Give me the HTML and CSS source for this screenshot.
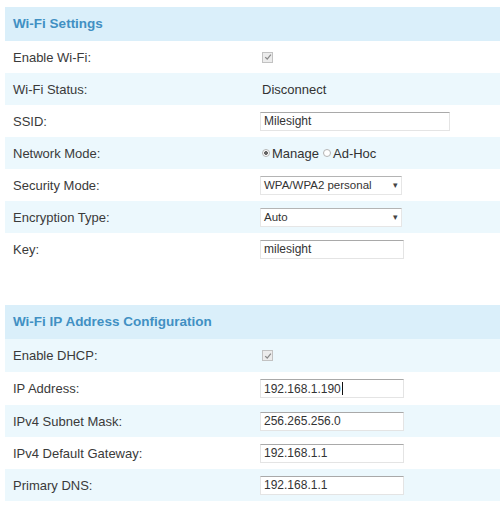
FILE: index.html
```html
<!DOCTYPE html>
<html lang="en">
<head>
	<meta charset="UTF-8">
	<title>Wi-Fi</title>
	<link rel="stylesheet" href="styles.css">
</head>
<body>
	<div class="panel">
		<div class="panel-title">Wi-Fi Settings</div>
		<div class="row">
			<span class="label">Enable Wi-Fi:</span>
			<span class="value"><span class="check"><svg viewBox="0 0 10 10" width="8" height="8"><path d="M1.5 5.2 L4 7.6 L8.6 2" fill="none" stroke="#8a8a8a" stroke-width="1.6"/></svg></span></span>
		</div>
		<div class="row stripe">
			<span class="label">Wi-Fi Status:</span>
			<span class="value">Disconnect</span>
		</div>
		<div class="row">
			<span class="label">SSID:</span>
			<span class="value"><span class="field wide">Milesight</span></span>
		</div>
		<div class="row stripe">
			<span class="label">Network Mode:</span>
			<span class="value"><span class="radio on"></span>Manage<span class="radio gap"></span>Ad-Hoc</span>
		</div>
		<div class="row">
			<span class="label">Security Mode:</span>
			<span class="value"><span class="select"><span class="small">WPA/WPA2 personal</span><span class="arrow">&#9662;</span></span></span>
		</div>
		<div class="row stripe">
			<span class="label">Encryption Type:</span>
			<span class="value"><span class="select"><span class="small">Auto</span><span class="arrow">&#9662;</span></span></span>
		</div>
		<div class="row">
			<span class="label">Key:</span>
			<span class="value"><span class="field">milesight</span></span>
		</div>
	</div>

	<div class="panel second">
		<div class="panel-title">Wi-Fi IP Address Configuration</div>
		<div class="row stripe tall">
			<span class="label">Enable DHCP:</span>
			<span class="value"><span class="check"><svg viewBox="0 0 10 10" width="8" height="8"><path d="M1.5 5.2 L4 7.6 L8.6 2" fill="none" stroke="#8a8a8a" stroke-width="1.6"/></svg></span></span>
		</div>
		<div class="row tall">
			<span class="label">IP Address:</span>
			<span class="value"><span class="field">192.168.1.190<span class="caret"></span></span></span>
		</div>
		<div class="row stripe">
			<span class="label">IPv4 Subnet Mask:</span>
			<span class="value"><span class="field">256.265.256.0</span></span>
		</div>
		<div class="row">
			<span class="label">IPv4 Default Gateway:</span>
			<span class="value"><span class="field">192.168.1.1</span></span>
		</div>
		<div class="row stripe">
			<span class="label">Primary DNS:</span>
			<span class="value"><span class="field">192.168.1.1</span></span>
		</div>
	</div>
</body>
</html>
```

FILE: styles.css
```css
body {
	margin: 0;
	padding: 7px 3px 0 5px;
	background: #fff;
	font-family: "Liberation Sans", Arial, sans-serif;
	color: #333;
}
.panel {
	width: 495px;
}
.second {
	margin-top: 40px;
}
.panel-title {
	height: 34px;
	line-height: 34px;
	padding-left: 8px;
	background: #daeffa;
	color: #4190c3;
	font-size: 13.5px;
	font-weight: bold;
}
.row {
	display: grid;
	grid-template-columns: 249px 1fr;
	align-items: center;
	height: 32px;
	padding-left: 8px;
	font-size: 13px;
}
.row.tall {
	height: 33px;
}
.stripe {
	background: #ecf8fd;
}
.label {
	color: #3a3a3a;
}
.value {
	display: flex;
	align-items: center;
	color: #333;
}
.check {
	display: inline-flex;
	align-items: center;
	justify-content: center;
	width: 9px;
	height: 9px;
	border: 1px solid #c2c2c2;
	background: #ececec;
}
.radio {
	display: inline-block;
	width: 6px;
	height: 6px;
	margin-right: 2px;
	border: 1px solid #b4b4b4;
	border-radius: 50%;
	background: #fff;
}
.radio.on {
	background: radial-gradient(circle, #666 0 1.6px, #fff 2.2px);
}
.radio.gap {
	margin-left: 4px;
}
.field {
	display: flex;
	align-items: center;
	box-sizing: border-box;
	width: 144px;
	height: 19px;
	margin-left: -2px;
	padding-left: 3px;
	border: 1px solid #e4e4e4;
	border-top-color: #a9a9a9;
	background: #fff;
	font-size: 12px;
}
.field.wide {
	width: 190px;
}
.caret {
	display: inline-block;
	width: 1px;
	height: 13px;
	margin-left: 1px;
	background: #111;
}
.select {
	display: flex;
	align-items: center;
	justify-content: space-between;
	box-sizing: border-box;
	width: 142px;
	height: 19px;
	margin-left: -2px;
	padding: 0 3px 0 3px;
	border: 1px solid #e6e6e6;
	border-top-color: #b4b4b4;
	background: #fff;
}
.small {
	font-size: 11.5px;
}
.arrow {
	font-size: 9px;
	color: #444;
}
```
